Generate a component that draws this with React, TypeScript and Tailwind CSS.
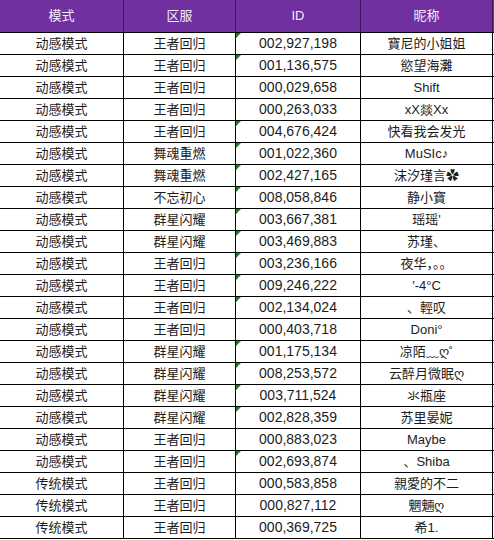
const rows: [string, string, string, string, boolean][] = [
  ['动感模式', '王者回归', '002,927,198', '寶尼的小姐姐', true],
  ['动感模式', '王者回归', '001,136,575', '慾望海灘', true],
  ['动感模式', '王者回归', '000,029,658', 'Shift', false],
  ['动感模式', '王者回归', '000,263,033', 'xX燚Xx', false],
  ['动感模式', '王者回归', '004,676,424', '快看我会发光', true],
  ['动感模式', '舞魂重燃', '001,022,360', 'MuSIc♪', true],
  ['动感模式', '舞魂重燃', '002,427,165', '沫汐瑾言✿', true],
  ['动感模式', '不忘初心', '008,058,846', '静小寶', true],
  ['动感模式', '群星闪耀', '003,667,381', "瑶瑶'", true],
  ['动感模式', '群星闪耀', '003,469,883', '苏瑾、', true],
  ['动感模式', '王者回归', '003,236,166', '夜华，。。', true],
  ['动感模式', '王者回归', '009,246,222', '′-4°C', true],
  ['动感模式', '王者回归', '002,134,024', '、輕叹', true],
  ['动感模式', '王者回归', '000,403,718', 'Doni°', false],
  ['动感模式', '群星闪耀', '001,175,134', '凉陌﹏ღ˚', true],
  ['动感模式', '群星闪耀', '008,253,572', '云醉月微眠ღ', true],
  ['动感模式', '群星闪耀', '003,711,524', '氺瓶座', true],
  ['动感模式', '群星闪耀', '002,828,359', '苏里晏妮', true],
  ['动感模式', '王者回归', '000,883,023', 'Maybe', false],
  ['动感模式', '王者回归', '002,693,874', '、Shiba', true],
  ['传统模式', '王者回归', '000,583,858', '親愛的不二', false],
  ['传统模式', '王者回归', '000,827,112', '魍魎ღ', false],
  ['传统模式', '王者回归', '000,369,725', '希1.', false],
]

const cols = 'grid grid-cols-[124px_112px_125px_132px]'
const cjk = "font-['Liberation_Sans','Noto_Sans_CJK_SC',sans-serif]"

export default function App() {
  return (
    <div className={`w-[494px] h-[540px] bg-white ${cjk} text-[#1c1c1c]`}>
      <div className={`${cols} h-[33px] bg-[#7030a0] border-b border-black text-[13px] text-[#f3ecfa]`}>
        {['模式', '区服', 'ID', '昵称'].map((h) => (
          <div key={h} className="flex items-center justify-center border-r border-[#3d1560]">
            {h}
          </div>
        ))}
      </div>
      {rows.map(([mode, server, id, name, flag], i) => (
        <div key={i} className={`${cols} h-[22px] border-b border-black text-[13px]`}>
          <div className="flex items-center justify-center border-r border-black">{mode}</div>
          <div className="flex items-center justify-center border-r border-black">{server}</div>
          <div className="relative flex items-center justify-center border-r border-black text-[14px]">
            {flag && (
              <span className="absolute left-0 top-0 w-0 h-0 border-t-[5px] border-r-[5px] border-t-[#1f7a2c] border-r-transparent" />
            )}
            {id}
          </div>
          <div className="flex items-center justify-center border-r border-black">{name}</div>
        </div>
      ))}
    </div>
  )
}
